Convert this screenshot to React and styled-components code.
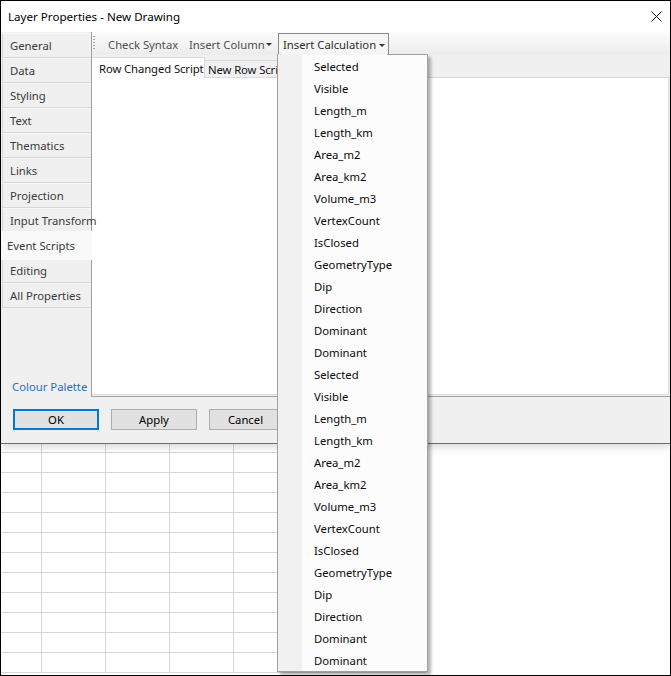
import React from 'react';
import styled, { createGlobalStyle } from 'styled-components';

const FONT = `"Noto Sans", "Open Sans", Arial, sans-serif`;
const SIZE = '11.3px';

const Global = createGlobalStyle`
  html, body { margin: 0; padding: 0; background: #fff; }
  body { font-family: ${FONT}; }
`;

const Frame = styled.div`
  position: relative;
  width: 671px;
  height: 676px;
  box-sizing: border-box;
  border: 1px solid #000;
  overflow: hidden;
  background: #fff;
  font-family: ${FONT};
  font-size: ${SIZE};
  display: flex;
  flex-direction: column;
`;

const Dialog = styled.div`
  position: relative;
  z-index: 1;
  display: flex;
  flex-direction: column;
  background: #f0f0f0;
  border-bottom: 1px solid #6e6e6e;
  box-shadow: 0 3px 8px rgba(0, 0, 0, 0.16);
`;

const TitleBar = styled.div`
  height: 31px;
  background: #fff;
  display: flex;
  align-items: center;
  justify-content: space-between;
  padding: 0 8px 1px 7px;
  box-sizing: border-box;
  color: #000;
`;

const Title = styled.span`
  font-size: 11.6px;
`;

const Main = styled.div`
  display: flex;
  height: 365px;
`;

const Sidebar = styled.div`
  width: 90px;
  box-sizing: border-box;
  padding: 1px 0 0 1px;
  display: flex;
  flex-direction: column;
`;

const Tab = styled.div`
  height: ${p => (p.$active ? '29px' : '25px')};
  margin: ${p => (p.$active ? '-2px 0 -2px -1px' : '0')};
  width: ${p => (p.$active ? '91px' : 'auto')};
  box-sizing: border-box;
  padding-left: ${p => (p.$active ? '6px' : '7px')};
  display: flex;
  align-items: center;
  background: ${p => (p.$active ? '#f9f9f9' : '#f0f0f0')};
  border-left: ${p => (p.$active ? 'none' : '1px solid #d7d7d7')};
  border-bottom: ${p => (p.$active ? 'none' : '1px solid #d7d7d7')};
  border-top: ${p => (p.$active ? 'none' : '1px solid #f7f7f7')};
  color: #3a3a3a;
  white-space: nowrap;
  position: relative;
  z-index: ${p => (p.$active ? 1 : 0)};
`;

const PaletteLink = styled.div`
  margin-top: auto;
  padding: 0 0 2px 10px;
  line-height: 16px;
  color: #1f6fc5;
  white-space: nowrap;
`;

const Content = styled.div`
  flex: 1;
  display: flex;
  flex-direction: column;
  border-left: 1px solid #a0a0a0;
  border-bottom: 1px solid #a0a0a0;
  min-width: 0;
`;

const Toolbar = styled.div`
  height: 23px;
  display: flex;
  align-items: flex-start;
  background: linear-gradient(#fbfbfb, #ececec);
  flex-shrink: 0;
`;

const Grip = styled.div`
  width: 2px;
  height: 15px;
  margin: 4px 8px 0 1px;
  background: repeating-linear-gradient(to bottom, #a3a3a3 0 1px, transparent 1px 3px);
`;

const ToolWrap = styled.div`
  position: relative;
`;

const ToolButton = styled.div`
  width: ${p => p.$w}px;
  height: ${p => (p.$open ? '23px' : '22px')};
  box-sizing: border-box;
  margin-top: 1px;
  padding: 0 ${p => p.$pr || 4}px 0 4px;
  display: flex;
  align-items: center;
  justify-content: space-between;
  white-space: nowrap;
  color: ${p => (p.$open ? '#2e2e2e' : '#505050')};
  border: 1px solid ${p => (p.$open ? '#8a8a8a' : 'transparent')};
  border-bottom: ${p => (p.$open ? 'none' : '1px solid transparent')};
  background: ${p => (p.$open ? '#f6f6f6' : 'transparent')};
  padding-bottom: ${p => (p.$open ? '1px' : '0')};
`;

const Caret = styled.span`
  width: 0;
  height: 0;
  border-left: 3px solid transparent;
  border-right: 3px solid transparent;
  border-top: 3px solid #333;
  margin-top: 1px;
`;

const TabStrip = styled.div`
  height: 23px;
  display: flex;
  align-items: flex-end;
  flex-shrink: 0;
`;

const SubTab = styled.div`
  width: ${p => p.$w}px;
  height: ${p => (p.$active ? '21px' : '18px')};
  box-sizing: border-box;
  padding-left: ${p => (p.$active ? '7px' : '3px')};
  display: flex;
  align-items: center;
  white-space: nowrap;
  overflow: hidden;
  color: #111;
  letter-spacing: -0.1px;
  background: ${p => (p.$active ? '#fff' : '#f0f0f0')};
  border-top: 1px solid #d9d9d9;
  border-right: 1px solid #d9d9d9;
  border-bottom: ${p => (p.$active ? 'none' : '1px solid #d9d9d9')};
`;

const StripFill = styled.div`
  flex: 1;
  border-bottom: 1px solid #d9d9d9;
`;

const Editor = styled.div`
  flex: 1;
  background: #fff;
  margin: 0 1px 1px 0;
  border-right: 1px solid #dcdcdc;
  border-bottom: 1px solid #dcdcdc;
`;

const Footer = styled.div`
  height: 46px;
  box-sizing: border-box;
  padding: 12px 12px 0;
  display: flex;
  align-items: flex-start;
  gap: 12px;
`;

const Button = styled.div`
  width: ${p => p.$w}px;
  height: 21px;
  box-sizing: border-box;
  display: flex;
  align-items: center;
  justify-content: center;
  background: #e1e1e1;
  color: #000;
  border: ${p => (p.$default ? '2px solid #0078d7' : '1px solid #adadad')};
`;

const Menu = styled.div`
  position: absolute;
  top: 22px;
  left: -1px;
  width: 151px;
  box-sizing: border-box;
  border: 1px solid #a0a0a0;
  background: linear-gradient(to right, #f1f1f1 0 24px, #fcfcfc 24px);
  box-shadow: 3px 3px 3px rgba(0, 0, 0, 0.3);
  z-index: 5;

  &::before {
    content: '';
    position: absolute;
    top: -1px;
    left: 0;
    width: 109px;
    height: 1px;
    background: linear-gradient(to right, #f1f1f1 0 24px, #f6f6f6 24px);
  }
`;

const MenuItem = styled.div`
  height: 22px;
  display: flex;
  align-items: center;
  padding-left: 36px;
  color: #0a0a0a;
  white-space: nowrap;
`;

const Sheet = styled.div`
  display: grid;
  grid-template-columns: 41px repeat(6, 64px);
  grid-template-rows: 9px;
  grid-auto-rows: 20px;
  width: 425px;
`;

const Cell = styled.div`
  box-sizing: border-box;
  border-right: 1px solid #d6d6d6;
  border-bottom: 1px solid #d6d6d6;
`;

const TABS = [
  'General', 'Data', 'Styling', 'Text', 'Thematics', 'Links', 'Projection',
  'Input Transform', 'Event Scripts', 'Editing', 'All Properties',
];

const BASE = [
  'Selected', 'Visible', 'Length_m', 'Length_km', 'Area_m2', 'Area_km2',
  'Volume_m3', 'VertexCount', 'IsClosed', 'GeometryType', 'Dip', 'Direction',
  'Dominant', 'Dominant',
];
const ITEMS = [...BASE, ...BASE];

function CloseIcon() {
  return (
    <svg width="11" height="11" viewBox="0 0 11 11">
      <path d="M0.5 0.5 L10.5 10.5 M10.5 0.5 L0.5 10.5" stroke="#111" strokeWidth="1" fill="none" />
    </svg>
  );
}

export default function App() {
  const cells = [];
  for (let r = 0; r < 12; r++) {
    for (let c = 0; c < 7; c++) cells.push(<Cell key={`${r}-${c}`} />);
  }
  return (
    <>
      <Global />
      <Frame>
        <Dialog>
          <TitleBar>
            <Title>Layer Properties - New Drawing</Title>
            <CloseIcon />
          </TitleBar>
          <Main>
            <Sidebar>
              {TABS.map(t => (
                <Tab key={t} $active={t === 'Event Scripts'}>{t}</Tab>
              ))}
              <PaletteLink>Colour Palette</PaletteLink>
            </Sidebar>
            <Content>
              <Toolbar>
                <Grip />
                <ToolButton $w={81}>Check Syntax</ToolButton>
                <ToolButton $w={94} $pr={5}>Insert Column <Caret /></ToolButton>
                <ToolWrap>
                  <ToolButton $w={111} $open $pr={3}>Insert Calculation <Caret /></ToolButton>
                  <Menu>
                    {ITEMS.map((it, i) => (
                      <MenuItem key={i}>{it}</MenuItem>
                    ))}
                  </Menu>
                </ToolWrap>
              </Toolbar>
              <TabStrip>
                <SubTab $active $w={113}>Row Changed Script</SubTab>
                <SubTab $w={100}>New Row Script</SubTab>
                <StripFill />
              </TabStrip>
              <Editor />
            </Content>
          </Main>
          <Footer>
            <Button $default $w={86}>OK</Button>
            <Button $w={86}>Apply</Button>
            <Button $w={73}>Cancel</Button>
          </Footer>
        </Dialog>
        <Sheet>{cells}</Sheet>
      </Frame>
    </>
  );
}
